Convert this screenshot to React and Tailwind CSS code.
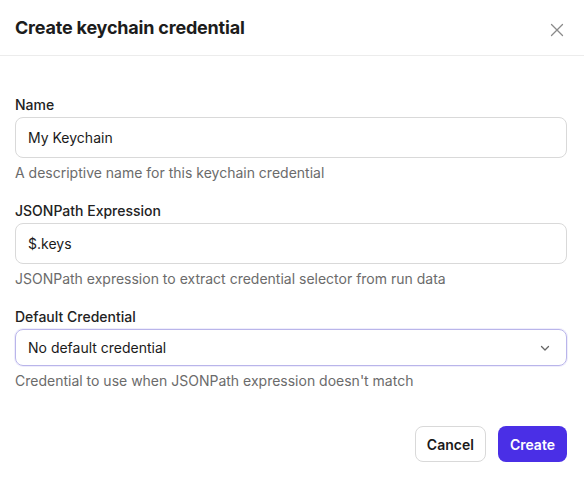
import React from "react";

export default function App() {
  return (
    <div className="w-[584px] h-[478px] bg-white text-[#1a1a1a] overflow-hidden" style={{ fontFamily: "Inter, 'Noto Sans', sans-serif" }}>
      <div className="h-[56px] flex items-center justify-between pl-[15px] pr-[20px] border-b border-[#ececec]">
        <h1 className="text-[18px] font-bold tracking-[-0.2px] text-[#1c1c1c] -mt-[1px]">Create keychain credential</h1>
        <svg width="14" height="14" viewBox="0 0 14 14" className="mt-[4px]" fill="none" stroke="#8a8a8a" strokeWidth="1.3" strokeLinecap="round">
          <path d="M1.5 1.5L12.5 12.5M12.5 1.5L1.5 12.5" />
        </svg>
      </div>
      <div className="px-[15px] pt-[40px] pr-[17px]">
        <div className="flex flex-col">
          <label className="text-[14px] font-medium text-[#222] leading-[18px]">Name</label>
          <div className="mt-[3px] h-[41px] rounded-[8px] border border-[#d9d9d9] flex items-center px-[12px] text-[14px] text-[#1a1a1a]">My Keychain</div>
          <p className="mt-[6px] text-[14px] text-[#6b6b6b] leading-[18px]">A descriptive name for this keychain credential</p>
        </div>
        <div className="flex flex-col mt-[20px]">
          <label className="text-[14px] font-medium text-[#222] leading-[18px]">JSONPath Expression</label>
          <div className="mt-[3px] h-[41px] rounded-[8px] border border-[#d9d9d9] flex items-center px-[12px] text-[14px] text-[#1a1a1a]">$.keys</div>
          <p className="mt-[6px] text-[14px] text-[#6b6b6b] leading-[18px]">JSONPath expression to extract credential selector from run data</p>
        </div>
        <div className="flex flex-col mt-[20px]">
          <label className="text-[14px] font-medium text-[#222] leading-[18px]">Default Credential</label>
          <div className="mt-[3px] h-[37px] rounded-[8px] border border-[#b9b5ea] flex items-center justify-between pl-[12px] pr-[15px] text-[14px] text-[#1a1a1a] shadow-[0_0_0_1px_rgba(120,110,230,0.12)]">
            <span>No default credential</span>
            <svg width="12" height="12" viewBox="0 0 12 12" fill="none" stroke="#666" strokeWidth="1.3" strokeLinecap="round" strokeLinejoin="round">
              <path d="M2.5 4.5L6 8L9.5 4.5" />
            </svg>
          </div>
          <p className="mt-[6px] text-[14px] text-[#6b6b6b] leading-[18px]">Credential to use when JSONPath expression doesn't match</p>
        </div>
        <div className="flex justify-end gap-[12px] mt-[36px]">
          <button className="h-[36px] px-[11px] rounded-[8px] border border-[#d9d9d9] bg-white text-[14px] font-semibold text-[#1a1a1a]">Cancel</button>
          <button className="h-[36px] px-[12px] rounded-[8px] bg-[#4a2fe6] text-[14px] font-semibold text-white">Create</button>
        </div>
      </div>
    </div>
  );
}
